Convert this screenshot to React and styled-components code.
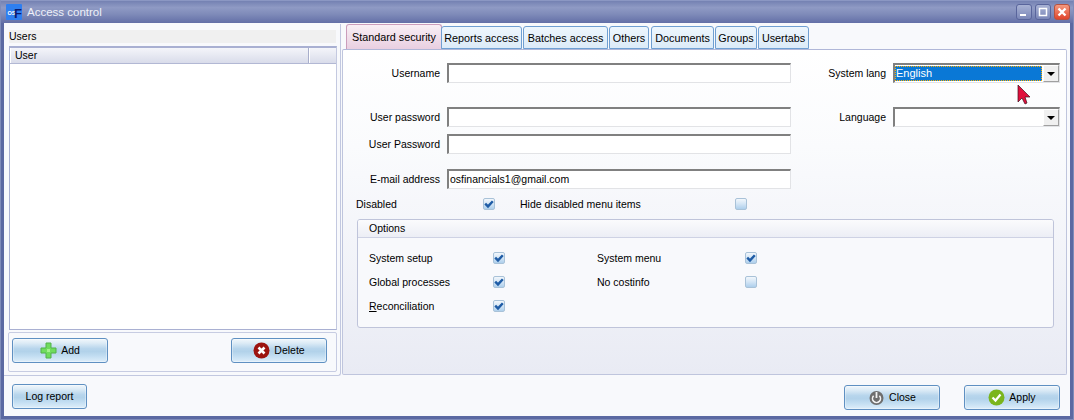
import React from "react";
import styled, { createGlobalStyle } from "styled-components";

const Global = createGlobalStyle`
  html, body { margin: 0; padding: 0; background: #5a68a0; }
  * { box-sizing: border-box; }
  body { font-family: "Liberation Sans", Arial, sans-serif; font-size: 10.5px; color: #000; }
`;

const Window = styled.div`
  width: 1074px; height: 420px; display: flex; flex-direction: column;
  background: #5b69a2; border: 1px solid #7f8cba; border-top-color: #8b97c3; overflow: hidden; position: relative;
`;
const TitleBar = styled.div`
  height: 22px; flex: none; display: flex; align-items: center; padding: 0 3px 0 5px;
  background: linear-gradient(180deg, #7481b2 0%, #8f9ac4 30%, #7f8bb9 60%, #636fa7 100%);
`;
const Logo = styled.svg`width: 16px; height: 16px; flex: none; margin-right: 5px;`;
const Title = styled.div`flex: 1; color: #eef0f8; font-size: 11.5px;`;
const WinBtn = styled.div`
  width: 16px; height: 16px; margin-left: 3px; border-radius: 3px; display: flex; align-items: center; justify-content: center;
  border: 1px solid ${p => p.$close ? "#b8523f" : "#59659c"};
  background: ${p => p.$close ? "linear-gradient(180deg,#f59a80,#e0452c)" : "linear-gradient(180deg,#a8b2d4,#7b87b8)"};
`;
const Client = styled.div`
  flex: 1; margin: 0 3px 3px; background: #f8f9fc; display: flex; flex-direction: column; min-height: 0;
`;
const Main = styled.div`height: 353px; flex: none; display: flex;`;
const LeftPanel = styled.div`
  width: 337px; flex: none; margin-top: 1px; padding: 6px 3px 4px 4px; display: flex; flex-direction: column;
  border: 1px solid #c2c8e0; border-top: 0; border-left: 0; border-radius: 0 0 3px 0; background: #f8f9fc;
`;
const UsersHead = styled.div`
  height: 13px; line-height: 13px; background: #f0f0f0; margin: 0 1px 0 1px; padding-left: 0; flex: none;
`;
const UserGrid = styled.div`
  margin: 3px 0 0 1px; height: 284px; flex: none; background: #fff; border: 1px solid #a9b0d2; border-top-width: 2px; border-right-color: #c4c9e0;
`;
const GridHead = styled.div`
  height: 16px; display: flex; border-bottom: 1px solid #b2b8d4; background: linear-gradient(180deg, #f4f5fa, #d9dcea);
`;
const GridCol = styled.div`
  width: ${p => p.$w}; padding-left: 4px; line-height: 15px; border-left: 1px solid #fff; border-right: 1px solid #a8aecb;
  &:last-child { border-right: 0; }
`;
const ButtonBar = styled.div`
  flex: none; height: 40px; margin: 2px 0 0 0; padding: 5px 9px 0 3px; display: flex; justify-content: space-between;
  border: 1px solid #c7cce2; border-radius: 2px;
`;
const Btn = styled.div`
  width: ${p => p.$w || 96}px; height: 25px; display: flex; align-items: center; justify-content: center; gap: 4px;
  margin-top: ${p => p.$mt || 0}px;
  border: 1px solid #5f90c2; border-radius: 3px; padding-bottom: 1px;
  background: linear-gradient(180deg, #f1f7fc 0%, #dcebf6 18%, #b7d5ec 42%, #b2d2ea 55%, #c3def2 75%, #deeefa 100%);
  box-shadow: inset 0 0 0 1px rgba(255,255,255,.35);
`;
const RightPanel = styled.div`flex: 1; display: flex; flex-direction: column; padding: 1px 3px 0 1px; min-width: 0;`;
const Tabs = styled.div`height: 25px; flex: none; display: flex; align-items: flex-end; padding-left: 4px; gap: 1px;`;
const Tab = styled.div`
  width: ${p => p.$w}px; text-align: center; white-space: nowrap; border-radius: 3px 3px 0 0;
  height: ${p => p.$active ? 25 : 23}px; line-height: ${p => p.$active ? 24 : 23}px;
  margin-right: ${p => p.$mr || 0}px; font-size: 10.8px;
  border: 1px solid ${p => p.$active ? "#cb9dbb" : "#6f9fd2"}; border-bottom-width: ${p => p.$active ? 0 : 1}px;
  background: ${p => p.$active ? "linear-gradient(180deg,#f8eff5,#e9cfe1)" : "linear-gradient(180deg,#eef6fd,#dcebf8)"};
`;
const Page = styled.div`
  height: 326px; flex: none; padding: 13px 6px 0 14px; display: flex; flex-direction: column;
  border: 1px solid #bfc5dd; border-top: 1px solid #b0b7d8; border-radius: 2px; background: linear-gradient(180deg, #fff 0%, #fafbfd 30%, #e9ebf4 100%);
`;
const Row = styled.div`
  display: grid; grid-template-columns: 90px 344px 102px 167px; align-items: center; margin-top: ${p => p.$mt || 0}px; height: 20px;
`;
const Label = styled.div`text-align: right; padding-right: 7px; white-space: nowrap;`;
const FieldBox = styled.div`
  height: 20px; background: #fff; line-height: 17px; padding-left: 1px; white-space: nowrap;
  border: 1px solid #e2e3e6; border-top: 2px solid #808080; border-left: 2px solid #808080;
`;
const Select = styled(FieldBox)`display: flex; align-items: stretch; padding: 0;`;
const SelectValue = styled.div`
  flex: 1; margin: 1px 1px 1px 0; padding-left: 1px; line-height: 14px; font-size: 11px;
  ${p => p.$selected && `background: #0a78d6; color: #fff; outline: 1px dotted #ffb000; outline-offset: -1px;`}
`;
const Arrow = styled.div`
  width: 16px; flex: none; display: flex; align-items: center; justify-content: center;
  background: #f0f0f0; border: 1px solid #fff; border-right-color: #a0a0a0; border-bottom-color: #a0a0a0;
  &::after { content: ""; border-left: 4px solid transparent; border-right: 4px solid transparent; border-top: 4px solid #000; }
`;
const CheckRow = styled.div`display: flex; align-items: center; height: 14px; margin-top: 8px;`;
const CheckLabel = styled.div`width: ${p => p.$w}px; margin-left: ${p => p.$ml || 0}px; white-space: nowrap; flex: none;`;
const Box = styled.div`
  width: 12px; height: 12px; flex: none; border: 1px solid #a9c2d8; border-radius: 2px; display: flex; align-items: center; justify-content: center;
  background: linear-gradient(180deg, #f2f7fc 0%, #d3e5f5 50%, #aecfec 100%);
`;
const Group = styled.div`
  margin: 8px 6px 0 0; height: 109px; flex: none; border: 1px solid #bfc4da; border-radius: 3px; background: #f8f9fc; overflow: hidden;
`;
const GroupHead = styled.div`
  height: 18px; padding-left: 11px; line-height: 17px; border-bottom: 1px solid #ced2e4; background: linear-gradient(180deg, #fbfbfd, #eceef5);
`;
const GroupBody = styled.div`
  display: grid; grid-template-columns: 228px 166px; grid-auto-rows: 24px; padding: 8px 0 0 11px; align-items: center;
`;
const Option = styled.div`display: flex; align-items: center;`;
const Footer = styled.div`flex: 1; display: flex; align-items: flex-start; padding: 8px 10px 0 8px; gap: 24px;`;
const Spacer = styled.div`flex: 1;`;
const Cursor = styled.svg`position: absolute; left: 1016px; top: 84px; width: 15px; height: 20px;`;

const Check = ({ on }) => (
  <Box>{on && <svg width="10" height="10" viewBox="0 0 10 10"><path d="M1.2 4.6 L4 7.4 L8.8 2.2" fill="none" stroke="#1f5ca6" strokeWidth="2.4" /></svg>}</Box>
);
const Opt = ({ label, on, w }) => (
  <Option><CheckLabel $w={w}>{label}</CheckLabel><Check on={on} /></Option>
);

export default function App() {
  return (
    <Window>
      <Global />
      <TitleBar>
        <Logo viewBox="0 0 16 16">
          <rect width="16" height="16" rx="1" fill="#2f7ff0" />
          <text x="1.5" y="11" fontSize="5.5" fontWeight="700" fill="#fff" fontFamily="Liberation Sans">OS</text>
          <text x="8" y="13.5" fontSize="13" fontWeight="700" fill="#0b1c70" fontFamily="Liberation Sans">F</text>
        </Logo>
        <Title>Access control</Title>
        <WinBtn><svg width="10" height="10"><rect x="1" y="7" width="6" height="2" fill="#fff" /></svg></WinBtn>
        <WinBtn><svg width="10" height="10"><rect x="1.5" y="1.5" width="7" height="7" fill="none" stroke="#fff" strokeWidth="1.5" /></svg></WinBtn>
        <WinBtn $close><svg width="10" height="10"><path d="M1.5 1.5 L8.5 8.5 M8.5 1.5 L1.5 8.5" stroke="#fff" strokeWidth="2.4" /></svg></WinBtn>
      </TitleBar>
      <Client>
        <Main>
          <LeftPanel>
            <UsersHead>Users</UsersHead>
            <UserGrid>
              <GridHead><GridCol $w="299px">User</GridCol><GridCol $w="26px" /></GridHead>
            </UserGrid>
            <ButtonBar>
              <Btn>
                <svg width="17" height="17" viewBox="0 0 17 17"><path d="M6 1h5v5h5v5h-5v5H6v-5H1V6h5z" fill="#6fdc5e" stroke="#52b24a" /><path d="M7 7h3v3H7z" fill="#a4f08e" /></svg>
                Add
              </Btn>
              <Btn>
                <svg width="17" height="17" viewBox="0 0 17 17"><circle cx="8.5" cy="8.5" r="8" fill="#9c1410" /><path d="M5.5 5.5 L11.5 11.5 M11.5 5.5 L5.5 11.5" stroke="#fff" strokeWidth="2.6" /></svg>
                Delete
              </Btn>
            </ButtonBar>
          </LeftPanel>
          <RightPanel>
            <Tabs>
              <Tab $active $w={96} $mr={-2}>Standard security</Tab>
              <Tab $w={81}>Reports access</Tab>
              <Tab $w={85}>Batches access</Tab>
              <Tab $w={40} $mr={1}>Others</Tab>
              <Tab $w={63}>Documents</Tab>
              <Tab $w={42}>Groups</Tab>
              <Tab $w={51}>Usertabs</Tab>
            </Tabs>
            <Page>
              <Row>
                <Label>Username</Label>
                <FieldBox />
                <Label>System lang</Label>
                <Select><SelectValue $selected>English</SelectValue><Arrow /></Select>
              </Row>
              <Row $mt={24}>
                <Label>User password</Label>
                <FieldBox />
                <Label>Language</Label>
                <Select><SelectValue /><Arrow /></Select>
              </Row>
              <Row $mt={7}>
                <Label>User Password</Label>
                <FieldBox />
              </Row>
              <Row $mt={15}>
                <Label>E-mail address</Label>
                <FieldBox>osfinancials1@gmail.com</FieldBox>
              </Row>
              <CheckRow>
                <CheckLabel $w={127} $ml={-1}>Disabled</CheckLabel>
                <Check on />
                <CheckLabel $w={215} $ml={25}>Hide disabled menu items</CheckLabel>
                <Check />
              </CheckRow>
              <Group>
                <GroupHead>Options</GroupHead>
                <GroupBody>
                  <Opt label="System setup" on w={124} />
                  <Opt label="System menu" on w={148} />
                  <Opt label="Global processes" on w={124} />
                  <Opt label="No costinfo" w={148} />
                  <Opt label={<><u>R</u>econciliation</>} on w={124} />
                </GroupBody>
              </Group>
            </Page>
          </RightPanel>
        </Main>
        <Footer>
          <Btn $w={75}>Log report</Btn>
          <Spacer />
          <Btn $mt={1}>
            <svg width="17" height="17" viewBox="0 0 17 17"><circle cx="8.5" cy="9" r="7" fill="#6e6e6e" /><path d="M5.6 6.8 A4 4 0 1 0 11.4 6.8" fill="none" stroke="#f2f2f2" strokeWidth="1.6" /><rect x="7.6" y="3" width="1.8" height="6" fill="#f2f2f2" /></svg>
            Close
          </Btn>
          <Btn $mt={1}>
            <svg width="17" height="17" viewBox="0 0 17 17"><circle cx="8.5" cy="8.5" r="8" fill="#7ab51d" /><path d="M4.5 8.5 L7.5 11.5 L12.5 5.5" fill="none" stroke="#fff" strokeWidth="2.2" /></svg>
            Apply
          </Btn>
        </Footer>
      </Client>
      <Cursor viewBox="0 0 15 20"><path d="M1 0 L1 17 L5 13 L8 19 L10 18 L8 12 L13 12 Z" fill="#e0103c" stroke="#40101c" strokeWidth=".7" /></Cursor>
    </Window>
  );
}
